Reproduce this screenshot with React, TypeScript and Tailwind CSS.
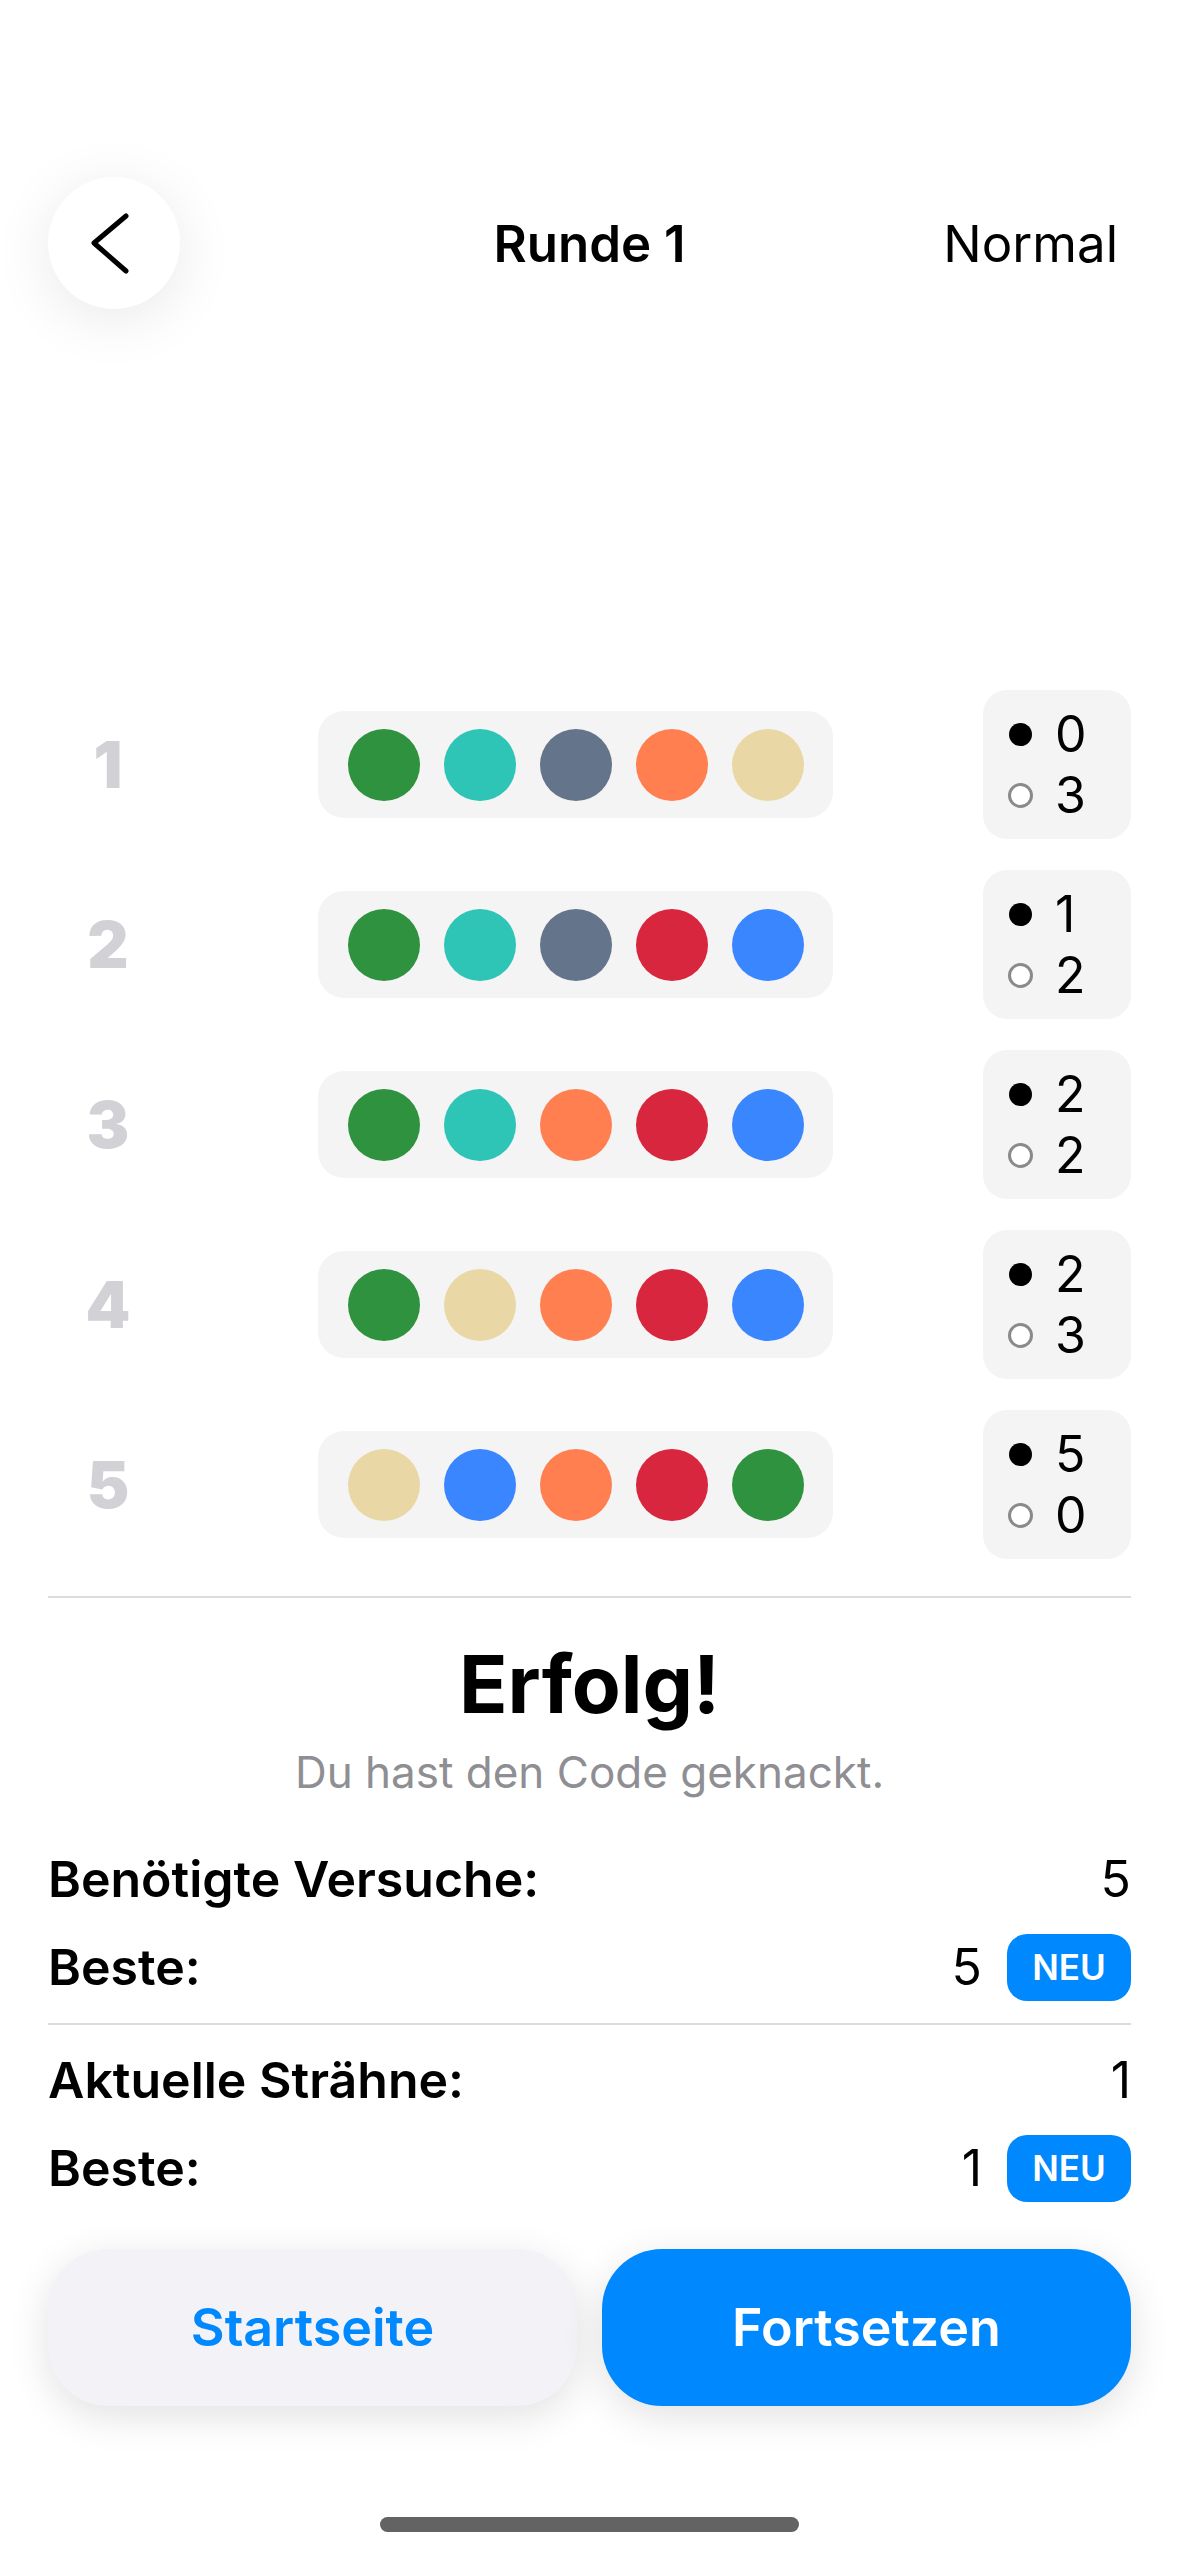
import React from "react";

type Peg = "green" | "teal" | "slate" | "orange" | "tan" | "red" | "blue";

const pegColors: Record<Peg, string> = {
  green: "bg-[#2f923e]",
  teal: "bg-[#2ec4b6]",
  slate: "bg-[#64748b]",
  orange: "bg-[#ff7f50]",
  tan: "bg-[#e9d7a5]",
  red: "bg-[#d7263d]",
  blue: "bg-[#3a86ff]",
};

const guesses: { pegs: Peg[]; black: number; white: number }[] = [
  { pegs: ["green", "teal", "slate", "orange", "tan"], black: 0, white: 3 },
  { pegs: ["green", "teal", "slate", "red", "blue"], black: 1, white: 2 },
  { pegs: ["green", "teal", "orange", "red", "blue"], black: 2, white: 2 },
  { pegs: ["green", "tan", "orange", "red", "blue"], black: 2, white: 3 },
  { pegs: ["tan", "blue", "orange", "red", "green"], black: 5, white: 0 },
];

function GuessRow({ index, pegs, black, white }: { index: number; pegs: Peg[]; black: number; white: number }) {
  return (
    <div className="flex h-[149px] items-center justify-between">
      <div className="w-[120px] text-center text-[64px] font-black leading-none text-[#d1d1d6]">
        {index}
      </div>
      <div className="flex h-[107px] w-[515px] items-center justify-center gap-[24px] rounded-[26px] bg-[#f4f4f4]">
        {pegs.map((p, i) => (
          <div key={i} className={`h-[72px] w-[72px] rounded-full ${pegColors[p]}`} />
        ))}
      </div>
      {/* feedback: black = right place, white = right colour */}
      <div className="flex h-[149px] w-[148px] flex-col justify-center rounded-[24px] bg-[#f4f4f4] pl-[24px]">
        <div className="flex h-[61px] items-center gap-[22px]">
          <div className="flex w-[26px] justify-center">
            <div className="h-[23px] w-[23px] rounded-full bg-black" />
          </div>
          <span className="text-[50px] leading-none text-black">{black}</span>
        </div>
        <div className="flex h-[61px] items-center gap-[22px]">
          <div className="flex w-[26px] justify-center">
            <div className="h-[25px] w-[25px] rounded-full border-[3px] border-[#8a8a8a] bg-white" />
          </div>
          <span className="text-[50px] leading-none text-black">{white}</span>
        </div>
      </div>
    </div>
  );
}

function StatRow({ label, value, isNew }: { label: string; value: number; isNew?: boolean }) {
  return (
    <div className="flex h-[88px] items-center justify-between">
      <span className="text-[50px] font-semibold leading-none text-black">{label}</span>
      <div className="flex items-center gap-[25px]">
        <span className="text-[50px] leading-none text-black">{value}</span>
        {isNew && (
          <div className="flex h-[67px] w-[124px] items-center justify-center rounded-[20px] bg-[#0088ff] text-[35px] font-semibold leading-none text-white">
            NEU
          </div>
        )}
      </div>
    </div>
  );
}

export default function App() {
  return (
    <div
      className="flex h-[2556px] w-[1179px] flex-col overflow-hidden bg-white"
      style={{ fontFamily: "Inter, 'Noto Sans', sans-serif" }}
    >
      {/* header */}
      <div className="mt-[177px] grid h-[132px] grid-cols-[1fr_auto_1fr] items-center px-[48px]">
        <button className="flex h-[132px] w-[132px] items-center justify-center rounded-full bg-white shadow-[0_10px_60px_rgba(0,0,0,0.09)]">
          <svg width="132" height="132" viewBox="0 0 132 132" fill="none">
            <polyline
              points="78,39 46,66 78,94"
              stroke="#000"
              strokeWidth="5"
              strokeLinecap="round"
              strokeLinejoin="round"
            />
          </svg>
        </button>
        <div className="text-[51px] font-semibold leading-none text-black">Runde 1</div>
        <div className="justify-self-end pr-[13px] text-[51px] leading-none text-black">Normal</div>
      </div>

      {/* board */}
      <div className="mt-[381px] flex flex-col gap-[31px] px-[48px]">
        {guesses.map((g, i) => (
          <GuessRow key={i} index={i + 1} pegs={g.pegs} black={g.black} white={g.white} />
        ))}
      </div>

      <div className="mx-[48px] mt-[37px] h-[2px] bg-[#dcdcdc]" />

      <div className="mt-[46px] text-center text-[80px] font-bold leading-none text-black">Erfolg!</div>
      <div className="mt-[26px] text-center text-[44px] leading-none text-[#8e8e93]">
        Du hast den Code geknackt.
      </div>

      {/* stats */}
      <div className="mt-[41px] flex flex-col px-[48px]">
        <StatRow label="Benötigte Versuche:" value={5} />
        <StatRow label="Beste:" value={5} isNew />
        <div className="mb-[11px] mt-[12px] h-[2px] bg-[#dcdcdc]" />
        <StatRow label="Aktuelle Strähne:" value={1} />
        <StatRow label="Beste:" value={1} isNew />
      </div>

      {/* actions */}
      <div className="mt-[37px] flex gap-[25px] px-[48px]">
        <button className="flex h-[157px] flex-1 items-center justify-center rounded-[60px] bg-[#f2f2f7] text-[52px] font-semibold text-[#0088ff] shadow-[0_10px_40px_rgba(0,0,0,0.12)]">
          Startseite
        </button>
        <button className="flex h-[157px] flex-1 items-center justify-center rounded-[60px] bg-[#0088ff] text-[52px] font-semibold text-white shadow-[0_10px_40px_rgba(0,0,0,0.12)]">
          Fortsetzen
        </button>
      </div>

      <div className="mx-auto mt-[111px] h-[15px] w-[419px] rounded-full bg-[#636363]" />
    </div>
  );
}
